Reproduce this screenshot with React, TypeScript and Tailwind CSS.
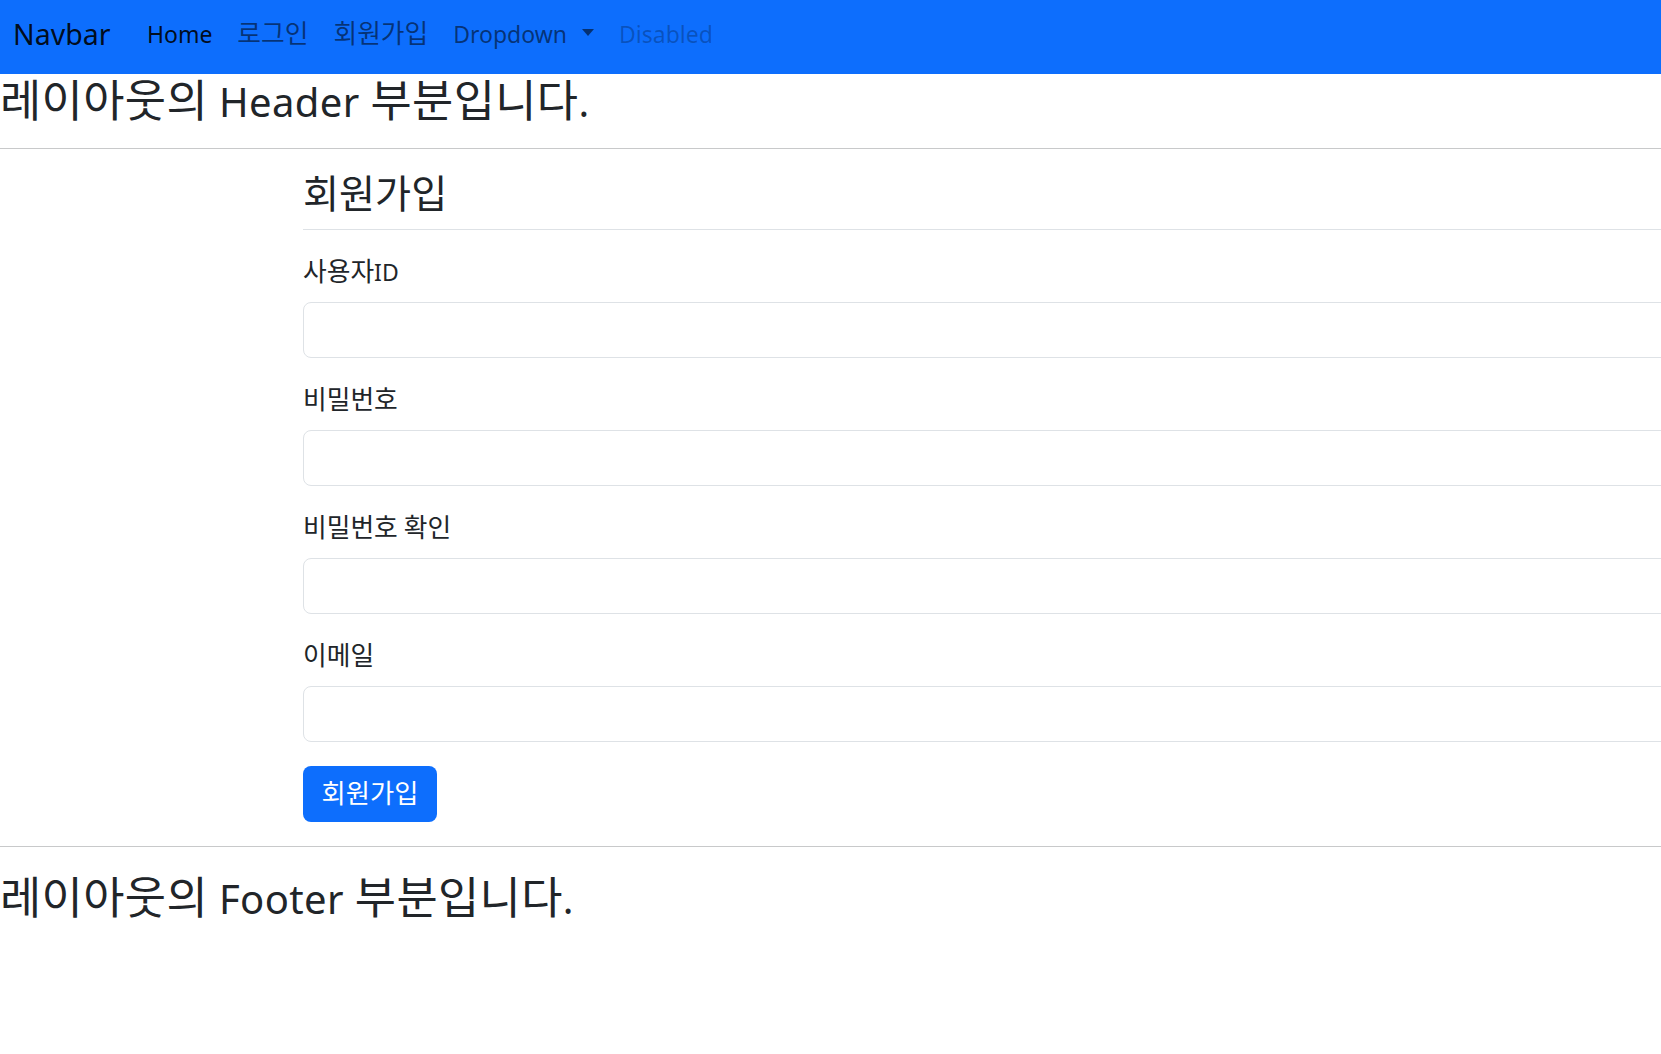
import React from 'react'

const font = "font-['Noto_Sans','Noto_Sans_CJK_KR',sans-serif]"

// Hangul runs get a slightly bigger size so they sit like the Malgun glyphs of the page
function K({ children }: { children: string }) {
  const parts = children.split(/([\uAC00-\uD7A3]+)/)
  return (
    <>
      {parts.map((p, i) =>
        /[\uAC00-\uD7A3]/.test(p) ? (
          <span key={i} className="text-[1.12em] leading-[0]">
            {p}
          </span>
        ) : (
          <React.Fragment key={i}>{p}</React.Fragment>
        )
      )}
    </>
  )
}

function NavLink({ children, tone }: { children: string; tone: 'active' | 'normal' | 'disabled' }) {
  const color =
    tone === 'active' ? 'text-black/90' : tone === 'disabled' ? 'text-black/25' : 'text-black/55'
  return (
    <a className={`px-[12.5px] text-[23px] leading-[32px] ${color}`}>
      <K>{children}</K>
    </a>
  )
}

function Field({ label, type = 'text', last = false }: { label: string; type?: string; last?: boolean }) {
  return (
    <div className={last ? 'mb-[24px]' : 'mb-[28px]'}>
      <label className="block text-[23px] leading-[28px] mb-[16px] text-[#212529]">
        <K>{label}</K>
      </label>
      <input
        type={type}
        className="block w-[1500px] h-[56px] rounded-[8px] border border-[#dee2e6] bg-white px-4 outline-none"
      />
    </div>
  )
}

export default function App() {
  return (
    <div className={`min-h-screen w-full overflow-hidden bg-white text-[#212529] ${font}`}>
      {/* navbar */}
      <nav className="flex h-[74px] items-center bg-[#0d6efd] pl-[13px] pb-[7px]">
        <span className="mr-[24px] text-[28.5px] leading-[36px] text-black/90">Navbar</span>
        <div className="flex items-center">
          <NavLink tone="active">Home</NavLink>
          <NavLink tone="normal">로그인</NavLink>
          <NavLink tone="normal">회원가입</NavLink>
          <a className="flex items-center px-[12.5px] text-[23px] leading-[32px] text-black/55">
            Dropdown
            <span className="ml-[15px] mb-[2px] inline-block h-0 w-0 border-x-[6.5px] border-t-[7px] border-x-transparent border-t-black/55" />
          </a>
          <NavLink tone="disabled">Disabled</NavLink>
        </div>
      </nav>

      {/* header */}
      <h2 className="mt-[2px] text-[40px] leading-[52px] font-normal tracking-[0.4px]">
        <K>레이아웃의 Header 부분입니다.</K>
      </h2>
      <hr className="mt-[20px] border-t border-[#c8c9ca]" />

      {/* join form */}
      <div className="pl-[303px]">
        <h3 className="mt-[26px] text-[35px] leading-[40px] font-normal">
          <K>회원가입</K>
        </h3>
        <hr className="mt-[14px] mb-[28px] w-[1500px] border-t border-[#dee2e6]" />
        <form>
          <Field label="사용자ID" />
          <Field label="비밀번호" type="password" />
          <Field label="비밀번호 확인" type="password" />
          <Field label="이메일" type="email" last />
          <button
            type="button"
            className="h-[56px] w-[134px] rounded-[8px] bg-[#0d6efd] text-[23.5px] leading-[32px] text-white"
          >
            <K>회원가입</K>
          </button>
        </form>
      </div>

      {/* footer */}
      <hr className="mt-[24px] border-t border-[#c8c9ca]" />
      <div className="mt-[26px] text-[40px] leading-[52px] tracking-[0.4px]">
        <K>레이아웃의 Footer 부분입니다.</K>
      </div>
    </div>
  )
}
